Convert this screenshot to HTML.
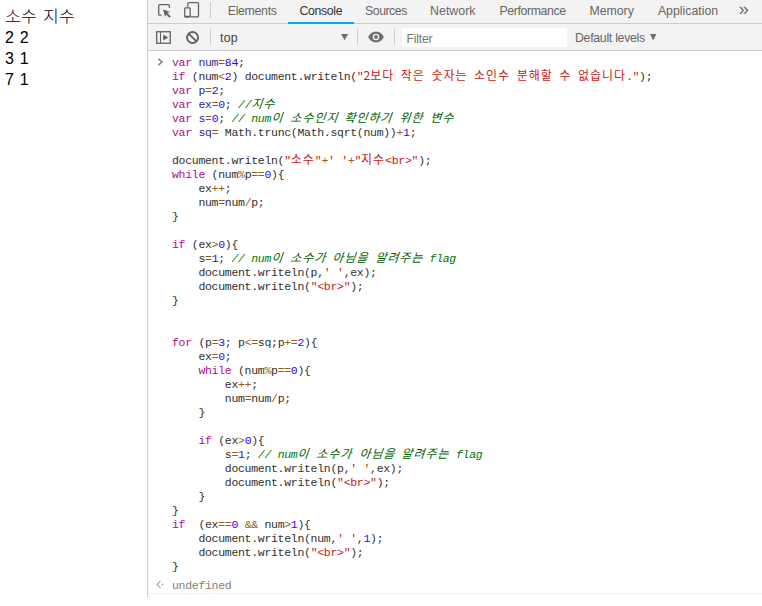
<!DOCTYPE html>
<html lang="ko">
<head>
<meta charset="utf-8">
<title>소수 지수</title>
<style>
html,body{margin:0;padding:0;background:#fff;}
body{width:762px;height:606px;overflow:hidden;position:relative;font-family:"Liberation Sans","Noto Sans CJK KR",sans-serif;}
#page{position:absolute;left:0;top:0;width:147px;height:606px;background:#fff;}
#page .t{position:absolute;left:5px;font-size:16px;line-height:21px;color:#000;white-space:pre;font-family:"Liberation Sans","Noto Sans CJK KR",sans-serif;}
#page .t{word-spacing:1.5px;}
#page .k{left:5.4px;letter-spacing:0.2px;word-spacing:1.1px;font-weight:300;transform:scale(1.07,0.97);transform-origin:0 60%;}
#split{position:absolute;left:147px;top:0;width:1px;height:597px;background:#cbcbcb;}
#dt{position:absolute;left:148px;top:0;width:614px;height:606px;background:#fff;}
#tabs{position:absolute;left:0;top:0;width:614px;height:23px;background:#f3f3f3;border-bottom:1px solid #ccc;}
#bar{position:absolute;left:0;top:24px;width:614px;height:26px;background:#f3f3f3;border-bottom:1px solid #ccc;}
.tab{position:absolute;top:0;height:23px;line-height:22px;font-size:12.3px;color:#666;white-space:nowrap;}
.tab.sel{color:#333;}
#ul{position:absolute;left:140px;top:22px;width:66px;height:2px;background:#03a9f4;}
.sep{position:absolute;width:1px;background:#ccc;}
.ic{position:absolute;}
#filter{position:absolute;left:254px;top:4px;width:165px;height:19px;background:#fff;}
#filter span{position:absolute;left:4.500px;top:1px;line-height:20px;font-size:12.300px;letter-spacing:-0.25px;color:#757575;}
.bt{position:absolute;font-size:12px;line-height:20px;color:#444;white-space:nowrap;}
#code{position:absolute;left:24px;top:56px;font-family:"Liberation Mono","Noto Sans CJK KR",monospace;font-size:11.5px;letter-spacing:-0.3px;color:#303030;}
.l{height:14px;line-height:14px;white-space:pre;}
.l .k{color:#aa0d91;}
.l .d{color:#2a2a9c;}
.l .n{color:#3200ff;}
.l .o{color:#9a5a10;}
.l .s{color:#c41a16;}
.l .c{font-style:italic;color:#007400;}
.l .h{font-size:12px;line-height:0;letter-spacing:0.96px;font-family:"Noto Sans CJK KR",sans-serif;}
.l .hn{letter-spacing:0;}
.l .c .h{font-weight:400;color:#006000;font-style:normal;display:inline-block;line-height:0;vertical-align:baseline;transform:skewX(-20deg);transform-origin:0 5px;}
#prompt{position:absolute;left:9px;top:58px;}
#res{position:absolute;left:0;top:576px;width:614px;height:17px;border-bottom:1px solid #f0f0f0;}
#res span{position:absolute;left:24px;top:3px;font-family:"Liberation Mono",monospace;font-size:11.5px;letter-spacing:-0.3px;line-height:14px;color:#808080;}
</style>
</head>
<body>
<div id="page">
<div class="t k" style="top:6px">소수 지수</div>
<div class="t" style="top:27px">2 2</div>
<div class="t" style="top:48px">3 1</div>
<div class="t" style="top:69px">7 1</div>
</div>
<div id="split"></div>
<div id="dt">
 <div id="tabs">
  <svg class="ic" style="left:0;top:0" width="62" height="23" viewBox="0 0 62 23"><path d="M13.500 15.200H11.700a1 1 0 0 1-1-1V5.700a1 1 0 0 1 1-1h8.700a1 1 0 0 1 1 1V8" fill="none" stroke="#626262" stroke-width="1.300"/><path d="M15.100 9.300l6.900 2.700-2.600 1.100 3.400 3.400-1.300 1.300-3.400-3.400-1.100 2.600z" fill="#626262"/><path d="M39.800 7V3.700a1 1 0 0 1 1-1h8.700a1 1 0 0 1 1 1v12.200a1 1 0 0 1-1 1H42.500" fill="none" stroke="#626262" stroke-width="1.300"/><rect x="36.750" y="7.850" width="5.400" height="9.200" rx="0.800" fill="none" stroke="#626262" stroke-width="1.300"/><path d="M36.800 16.400h5.400" stroke="#626262" stroke-width="1.300"/></svg>
  <div class="sep" style="left:62px;top:2px;height:16px"></div>
  <div class="tab" style="left:79.74px;letter-spacing:-0.30px">Elements</div>
  <div class="tab sel" style="left:151.44px;letter-spacing:-0.33px">Console</div>
  <div class="tab" style="left:217.12px;letter-spacing:-0.49px">Sources</div>
  <div class="tab" style="left:282.12px;letter-spacing:0.04px">Network</div>
  <div class="tab" style="left:351.56px;letter-spacing:-0.39px">Performance</div>
  <div class="tab" style="left:441.50px;letter-spacing:-0.01px">Memory</div>
  <div class="tab" style="left:509.88px;letter-spacing:0.01px">Application</div>
  <div class="tab" style="left:590.500px;font-size:18.500px;line-height:17px;color:#6e6e6e">»</div>
  <div id="ul"></div>
 </div>
 <div id="bar">
  <svg class="ic" style="left:0;top:0" width="62" height="26" viewBox="0 0 62 26"><rect x="8.650" y="7.750" width="13.600" height="11.500" fill="none" stroke="#626262" stroke-width="1.300"/><path d="M12.500 7.750v11.500" stroke="#626262" stroke-width="1.100"/><path d="M15.200 10.500l5 3-5 3z" fill="#626262"/><circle cx="44.550" cy="13.500" r="5.500" fill="none" stroke="#626262" stroke-width="1.900"/><path d="M40.600 9.600l7.900 7.800" stroke="#626262" stroke-width="1.900"/></svg>
  <div class="sep" style="left:62px;top:5px;height:16px"></div>
  <div class="bt" style="left:72px;top:4px;font-size:12.300px;letter-spacing:0.3px">top</div>
  <svg class="ic" style="left:193px;top:10px" width="8" height="7" viewBox="0 0 8 7"><path d="M0 0h7.200L3.600 6.300z" fill="#6e6e6e"/></svg>
  <div class="sep" style="left:209px;top:5px;height:16px"></div>
  <svg class="ic" style="left:220px;top:7px" width="16" height="12" viewBox="0 0 16 12"><path d="M8 0.5C4.5 0.5 1.6 2.7 0.2 6c1.4 3.3 4.3 5.5 7.8 5.5s6.4-2.2 7.8-5.5C14.4 2.7 11.500 0.5 8 0.5z" fill="#6e6e6e"/><circle cx="8" cy="6" r="3.3" fill="#f3f3f3"/><circle cx="8" cy="6" r="1.9" fill="#6e6e6e"/></svg>
  <div class="sep" style="left:246px;top:5px;height:16px"></div>
  <div id="filter"><span>Filter</span></div>
  <div class="bt" style="left:427px;top:4px;color:#666;font-size:12.300px;letter-spacing:-0.28px">Default levels</div>
  <svg class="ic" style="left:502px;top:10px" width="7" height="7" viewBox="0 0 7 7"><path d="M0 0h6.400L3.200 6.500z" fill="#6e6e6e"/></svg>
 </div>
 <svg id="prompt" width="7" height="9" viewBox="0 0 7 9"><path d="M1.400 0.900L5 4 1.400 7.100" fill="none" stroke="#808080" stroke-width="1.500"/></svg>
 <div id="code">
<div class="l"><span class="k">var</span> <span class="d">num</span><span class="o">=</span><span class="n">84</span>;</div>
<div class="l"><span class="k">if</span> (num<span class="o">&lt;</span><span class="n">2</span>) document.writeln(<span class="s">"<span class="h hn">2</span><span class="h">보다</span> <span class="h">작은</span> <span class="h">숫자는</span> <span class="h">소인수</span> <span class="h">분해할</span> <span class="h">수</span> <span class="h">없습니다</span>."</span>);</div>
<div class="l"><span class="k">var</span> <span class="d">p</span><span class="o">=</span><span class="n">2</span>;</div>
<div class="l"><span class="k">var</span> <span class="d">ex</span><span class="o">=</span><span class="n">0</span>; <span class="c">//<span class="h">지수</span></span></div>
<div class="l"><span class="k">var</span> <span class="d">s</span><span class="o">=</span><span class="n">0</span>; <span class="c">// num<span class="h">이</span> <span class="h">소수인지</span> <span class="h">확인하기</span> <span class="h">위한</span> <span class="h">변수</span></span></div>
<div class="l"><span class="k">var</span> <span class="d">sq</span><span class="o">=</span> Math.trunc(Math.sqrt(num))<span class="o">+</span><span class="n">1</span>;</div>
<div class="l"></div>
<div class="l">document.writeln(<span class="s">"<span class="h">소수</span>"</span><span class="o">+</span><span class="s">' '</span><span class="o">+</span><span class="s">"<span class="h">지수</span>&lt;br&gt;"</span>);</div>
<div class="l"><span class="k">while</span> (num<span class="o">%</span>p<span class="o">==</span><span class="n">0</span>){</div>
<div class="l">    ex<span class="o">++</span>;</div>
<div class="l">    num<span class="o">=</span>num<span class="o">/</span>p;</div>
<div class="l">}</div>
<div class="l"></div>
<div class="l"><span class="k">if</span> (ex<span class="o">&gt;</span><span class="n">0</span>){</div>
<div class="l">    s<span class="o">=</span><span class="n">1</span>; <span class="c">// num<span class="h">이</span> <span class="h">소수가</span> <span class="h">아님을</span> <span class="h">알려주는</span> flag</span></div>
<div class="l">    document.writeln(p,<span class="s">' '</span>,ex);</div>
<div class="l">    document.writeln(<span class="s">"&lt;br&gt;"</span>);</div>
<div class="l">}</div>
<div class="l"></div>
<div class="l"></div>
<div class="l"><span class="k">for</span> (p<span class="o">=</span><span class="n">3</span>; p<span class="o">&lt;=</span>sq;p<span class="o">+=</span><span class="n">2</span>){</div>
<div class="l">    ex<span class="o">=</span><span class="n">0</span>;</div>
<div class="l">    <span class="k">while</span> (num<span class="o">%</span>p<span class="o">==</span><span class="n">0</span>){</div>
<div class="l">        ex<span class="o">++</span>;</div>
<div class="l">        num<span class="o">=</span>num<span class="o">/</span>p;</div>
<div class="l">    }</div>
<div class="l"></div>
<div class="l">    <span class="k">if</span> (ex<span class="o">&gt;</span><span class="n">0</span>){</div>
<div class="l">        s<span class="o">=</span><span class="n">1</span>; <span class="c">// num<span class="h">이</span> <span class="h">소수가</span> <span class="h">아님을</span> <span class="h">알려주는</span> flag</span></div>
<div class="l">        document.writeln(p,<span class="s">' '</span>,ex);</div>
<div class="l">        document.writeln(<span class="s">"&lt;br&gt;"</span>);</div>
<div class="l">    }</div>
<div class="l">}</div>
<div class="l"><span class="k">if</span>  (ex<span class="o">==</span><span class="n">0</span> <span class="o">&amp;&amp;</span> num<span class="o">&gt;</span><span class="n">1</span>){</div>
<div class="l">    document.writeln(num,<span class="s">' '</span>,<span class="n">1</span>);</div>
<div class="l">    document.writeln(<span class="s">"&lt;br&gt;"</span>);</div>
<div class="l">}</div>
 </div>
 <div id="res"><svg style="position:absolute;left:8px;top:4px" width="9" height="9" viewBox="0 0 9 9"><path d="M4.5 1L1 4.500 4.500 8" fill="none" stroke="#b0b0b0" stroke-width="1.2"/><circle cx="6.5" cy="4.5" r="0.9" fill="#b0b0b0"/></svg><span>undefined</span></div>
</div>
</body>
</html>
